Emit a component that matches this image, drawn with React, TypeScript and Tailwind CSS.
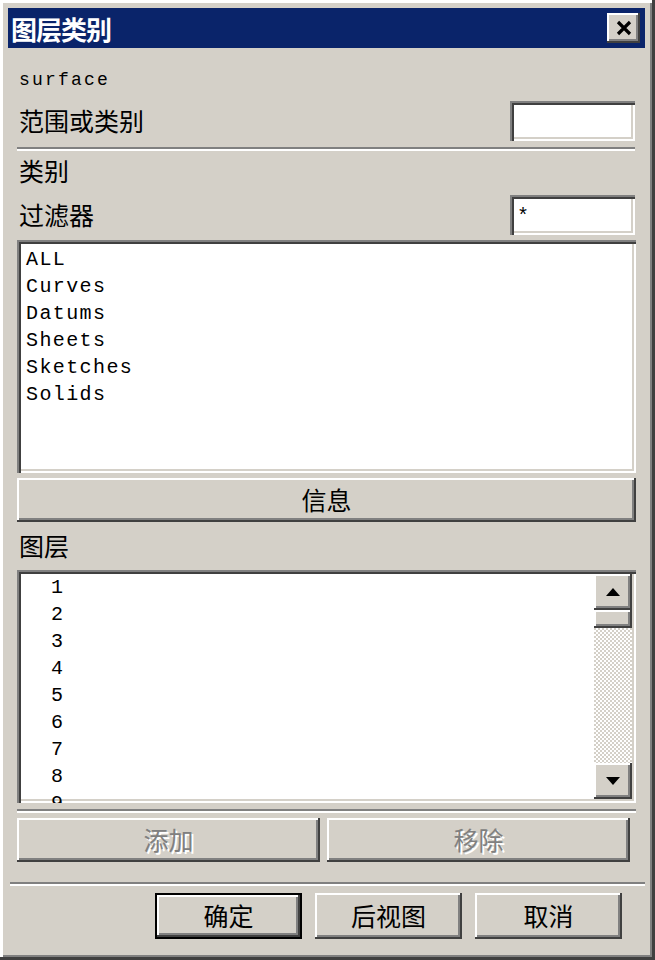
import React from 'react';

const cjk = "font-['Noto_Sans_CJK_SC','Noto_Sans',sans-serif]";
const mono = "font-['Liberation_Mono','DejaVu_Sans_Mono',monospace]";

const raised =
  'shadow-[inset_-2px_-2px_#404040,inset_2px_2px_#ffffff,inset_-4px_-4px_#808080]';
const sunken =
  'shadow-[inset_2px_2px_#808080,inset_4px_4px_#404040,inset_-2px_-2px_#ffffff,inset_-4px_-4px_#d4d0c8]';

const categories = ['ALL', 'Curves', 'Datums', 'Sheets', 'Sketches', 'Solids'];
const layers = ['1', '2', '3', '4', '5', '6', '7', '8', '9'];

const Separator: React.FC<{ className?: string }> = ({ className = '' }) => (
  <div className={`h-[4px] border-t-2 border-t-[#808080] border-b-2 border-b-white ${className}`} />
);

const Arrow: React.FC<{ up?: boolean }> = ({ up }) => (
  <svg width="16" height="10" viewBox="0 0 16 10">
    {up ? <polygon points="1,9 15,9 8,1" fill="#000" /> : <polygon points="1,1 15,1 8,9" fill="#000" />}
  </svg>
);

const Button: React.FC<{ label: string; disabled?: boolean; isDefault?: boolean; className?: string }> = ({
  label,
  disabled,
  isDefault,
  className = '',
}) => (
  <div
    className={`flex items-center justify-center bg-[#d4d0c8] text-[25px] ${cjk} ${className} ${
      isDefault
        ? 'border-2 border-black shadow-[inset_-2px_-2px_#404040,inset_2px_2px_#ffffff,inset_-4px_-4px_#808080]'
        : raised
    } ${disabled ? 'text-[#808080] [text-shadow:2px_2px_0_#ffffff]' : 'text-black'}`}
  >
    {label}
  </div>
);

export default function App() {
  return (
    <div className="w-[655px] h-[960px] bg-[#d4d0c8] p-[8px] shadow-[inset_-3px_-3px_#404040,inset_3px_3px_#ffffff,inset_-5px_-5px_#808080]">
      {/* Title bar */}
      <div className="h-[40px] mr-[2px] bg-[#0a246a] flex items-center justify-between pl-[3px] pr-[5px]">
        <span className={`text-white text-[26px] font-bold ${cjk} tracking-[-1px]`}>图层类别</span>
        <div className={`w-[33px] h-[30px] bg-[#d4d0c8] flex items-center justify-center ${raised}`}>
          <svg width="18" height="16" viewBox="0 0 18 16">
            <path d="M3 2 L15 14 M15 2 L3 14" stroke="#000" strokeWidth="3.2" />
          </svg>
        </div>
      </div>

      <div className="px-[9px]">
        <div className={`h-[28px] mt-[18px] flex items-center pl-[2px] text-[18px] tracking-[2.2px] ${mono}`}>surface</div>

        <div className="h-[42px] mt-[6px] flex items-center justify-between pl-[2px] pr-[3px]">
          <span className={`text-[25px] ${cjk}`}>范围或类别</span>
          <div className={`w-[125px] h-[40px] bg-white ${sunken}`} />
        </div>

        <Separator className="mt-[5px] mr-[3px]" />

        <div className={`h-[28px] mt-[6px] flex items-center pl-[2px] text-[25px] ${cjk}`}>类别</div>

        <div className="h-[42px] mt-[9px] flex items-center justify-between pl-[2px] pr-[3px]">
          <span className={`text-[25px] ${cjk}`}>过滤器</span>
          <div className={`w-[125px] h-[40px] bg-white flex items-center pl-[7px] pt-[4px] text-[20px] ${mono} ${sunken}`}>*</div>
        </div>

        <div className={`h-[233px] mt-[4px] mr-[2px] bg-white pt-[6px] pl-[9px] ${sunken}`}>
          {categories.map((c) => (
            <div key={c} className={`h-[27px] leading-[27px] text-[20px] tracking-[1.4px] ${mono}`}>
              {c}
            </div>
          ))}
        </div>

        <Button label="信息" className="h-[44px] mt-[5px] mr-[2px]" />

        <div className={`h-[28px] mt-[10px] flex items-center pl-[2px] text-[25px] ${cjk}`}>图层</div>

        <div className={`h-[233px] mt-[10px] mr-[2px] bg-white flex overflow-hidden ${sunken}`}>
          <div className="flex-1 pt-[4px] pl-[34px] overflow-hidden">
            {layers.map((l) => (
              <div key={l} className={`h-[27px] leading-[27px] text-[20px] ${mono}`}>
                {l}
              </div>
            ))}
          </div>
          <div className="w-[38px] mt-[4px] mb-[4px] mr-[4px] flex flex-col bg-[repeating-conic-gradient(#d4d0c8_0%_25%,#ffffff_0%_50%)] bg-[length:4px_4px]">
            <div className={`h-[36px] bg-[#d4d0c8] flex items-center justify-center ${raised}`}>
              <Arrow up />
            </div>
            <div className={`h-[18px] bg-[#d4d0c8] ${raised}`} />
            <div className="flex-1" />
            <div className={`h-[36px] bg-[#d4d0c8] flex items-center justify-center ${raised}`}>
              <Arrow />
            </div>
          </div>
        </div>

        <Separator className="mt-[6px] mr-[2px]" />

        <div className="flex gap-[7px] mt-[5px] mr-[8px]">
          <Button label="添加" disabled className="h-[44px] flex-1" />
          <Button label="移除" disabled className="h-[44px] flex-1" />
        </div>
      </div>

      <Separator className="mt-[20px] mx-[2px]" />

      <div className="flex justify-end gap-[13px] mt-[7px] pr-[25px]">
        <Button label="确定" isDefault className="w-[147px] h-[46px]" />
        <Button label="后视图" className="w-[147px] h-[46px]" />
        <Button label="取消" className="w-[147px] h-[46px]" />
      </div>
    </div>
  );
}
